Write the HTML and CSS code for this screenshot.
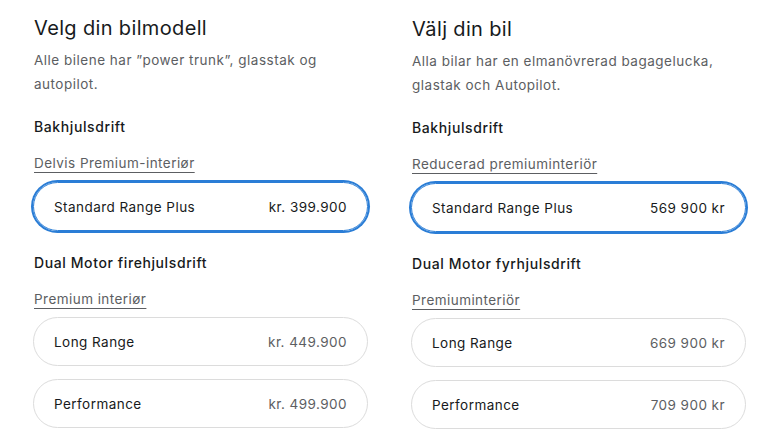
FILE: index.html
```html
<!DOCTYPE html>
<html lang="no">
<head>
<meta charset="utf-8">
<title>Velg din bilmodell</title>
<link rel="stylesheet" href="styles.css">
</head>
<body>
<main class="page">
  <section class="col">
    <h1 class="title">Velg din bilmodell</h1>
    <p class="desc">Alle bilene har ”power trunk”, glasstak og autopilot.</p>
    <h2 class="group">Bakhjulsdrift</h2>
    <a class="interior">Delvis Premium-interiør</a>
    <div class="card card-selected"><span class="name">Standard Range Plus</span><span class="price">kr. 399.900</span></div>
    <h2 class="group group-gap">Dual Motor firehjulsdrift</h2>
    <a class="interior">Premium interiør</a>
    <div class="card"><span class="name">Long Range</span><span class="price">kr. 449.900</span></div>
    <div class="card card-next"><span class="name">Performance</span><span class="price">kr. 499.900</span></div>
  </section>
  <section class="col col-sv">
    <h1 class="title">Välj din bil</h1>
    <p class="desc">Alla bilar har en elmanövrerad bagagelucka, glastak och Autopilot.</p>
    <h2 class="group">Bakhjulsdrift</h2>
    <a class="interior">Reducerad premiuminteriör</a>
    <div class="card card-selected"><span class="name">Standard Range Plus</span><span class="price">569 900 kr</span></div>
    <h2 class="group group-gap">Dual Motor fyrhjulsdrift</h2>
    <a class="interior">Premiuminteriör</a>
    <div class="card"><span class="name">Long Range</span><span class="price">669 900 kr</span></div>
    <div class="card card-next"><span class="name">Performance</span><span class="price">709 900 kr</span></div>
  </section>
</main>
</body>
</html>
```
FILE: styles.css
```css
html, body {
  margin: 0;
  padding: 0;
  background: #ffffff;
}
body {
  font-family: "Inter", "Liberation Sans", sans-serif;
  color: #171a20;
}
.page {
  display: flex;
  gap: 43px;
  padding-left: 33px;
}
.col {
  width: 335px;
  display: flex;
  flex-direction: column;
  align-items: flex-start;
  padding-top: 14px;
}
.col-sv {
  padding-top: 15px;
}
.title {
  margin: 0 0 0 1px;
  font-size: 20px;
  line-height: 28px;
  font-weight: 400;
  letter-spacing: 0.35px;
  color: #171a20;
}
.desc {
  margin: 6px 0 0 1px;
  font-size: 13.5px;
  line-height: 24px;
  letter-spacing: 0.5px;
  color: #5c5e62;
  width: 305px;
}
.group {
  margin: 21px 0 0 1px;
  font-size: 14px;
  line-height: 20px;
  font-weight: 500;
  letter-spacing: 0.6px;
  color: #171a20;
}
.group-gap {
  margin-top: 22px;
}
.interior {
  margin: 16px 0 8px 1px;
  font-size: 13.5px;
  line-height: 20px;
  letter-spacing: 0.45px;
  color: #5c5e62;
  text-decoration: underline;
  text-decoration-color: #5c5e62;
  text-underline-offset: 4px;
  text-decoration-thickness: 1px;
}
.card {
  box-sizing: border-box;
  width: 100%;
  height: 49px;
  border: 1px solid #dcdcdc;
  border-radius: 25px;
  display: flex;
  align-items: center;
  justify-content: space-between;
  padding: 0 20px;
  font-size: 13.5px;
  letter-spacing: 0.45px;
}
.card-selected {
  border-color: #2a7dd6;
  box-shadow: 0 0 0 2px #2a7dd6;
  margin-top: 1px;
}
.card-next {
  margin-top: 13px;
}
.name {
  color: #171a20;
}
.price {
  color: #5c5e62;
}
.card-selected .price {
  color: #171a20;
}
```
